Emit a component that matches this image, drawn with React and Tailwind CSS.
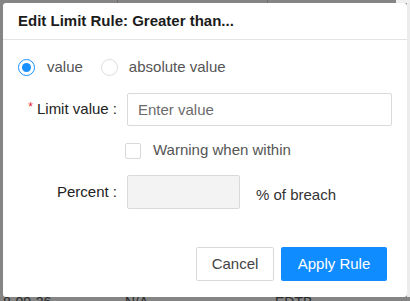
export default function App() {
  return (
    <div
      className="relative w-[410px] h-[301px] overflow-hidden bg-[#858585]"
      style={{ fontFamily: '"Liberation Sans", Arial, sans-serif' }}
    >
      {/* dimmed table behind the modal */}
      <div className="absolute left-0 top-0 w-full h-[3px] flex">
        <div className="w-[118px] border-r border-[#6f6f6f]" />
        <div className="w-[150px] border-r border-[#6f6f6f]" />
        <div className="w-[128px]" />
        <div className="flex-1 bg-[#f0f0f0]" />
      </div>
      <div className="absolute left-[3px] top-[292px] flex text-[14px] text-[#2a2a2a]">
        <span className="w-[122px]">8-09-26</span>
        <span className="w-[150px]">N/A</span>
        <span>EDTB</span>
      </div>
      <div className="absolute right-0 top-[3px] w-[3px] h-[294px] bg-[#ececec]" />

      {/* modal */}
      <div className="absolute left-[3px] top-[3px] w-[404px] h-[294px] bg-white rounded-[3px] flex flex-col">
        <div className="h-[37px] flex items-center px-[15px] border-b border-[#e3e3e3]">
          <h1 className="text-[15px] font-bold text-[#1c1c1c]">Edit Limit Rule: Greater than...</h1>
        </div>

        <div className="flex-1 flex flex-col pt-[17px] pl-[15px] pr-[15px]">
          <div className="h-[20px] flex items-center text-[15px] text-[#555]">
            <span className="w-[17px] h-[17px] rounded-full border border-[#1890ff] flex items-center justify-center">
              <span className="w-[9px] h-[9px] rounded-full bg-[#1890ff]" />
            </span>
            <span className="ml-[12px]">value</span>
            <span className="ml-[18px] w-[17px] h-[17px] rounded-full border border-[#dedede]" />
            <span className="ml-[11px]">absolute value</span>
          </div>

          <div className="mt-[16px] flex items-center">
            <label className="w-[99px] text-right text-[15px] text-[#222]">
              <span className="text-[#f5222d] text-[12px] mr-[4px] align-top">*</span>
              Limit value :
            </label>
            <input
              placeholder="Enter value"
              className="ml-[10px] w-[265px] h-[33px] border border-[#d9d9d9] rounded-[2px] px-[10px] text-[15px] text-[#222] placeholder:text-[#6b6b6b] outline-none"
            />
          </div>

          <div className="mt-[16px] flex items-center pl-[107px] h-[17px]">
            <span className="w-[16px] h-[16px] border border-[#d9d9d9] rounded-[2px]" />
            <span className="ml-[12px] text-[15px] text-[#555]">Warning when within</span>
          </div>

          <div className="mt-[16px] flex items-center">
            <label className="w-[99px] text-right text-[15px] text-[#222]">Percent :</label>
            <div className="ml-[10px] w-[113px] h-[34px] bg-[#f3f3f3] border border-[#d9d9d9] rounded-[2px]" />
            <span className="ml-[16px] mt-[6px] text-[15px] text-[#333]">% of breach</span>
          </div>

          <div className="mt-auto mb-[16px] flex justify-end gap-[7px] pr-[5px]">
            <button className="w-[78px] h-[34px] border border-[#d9d9d9] rounded-[2px] bg-white text-[15px] text-[#444]">
              Cancel
            </button>
            <button className="w-[106px] h-[34px] rounded-[2px] bg-[#0f8cff] text-[15px] text-white">
              Apply Rule
            </button>
          </div>
        </div>
      </div>
    </div>
  );
}
